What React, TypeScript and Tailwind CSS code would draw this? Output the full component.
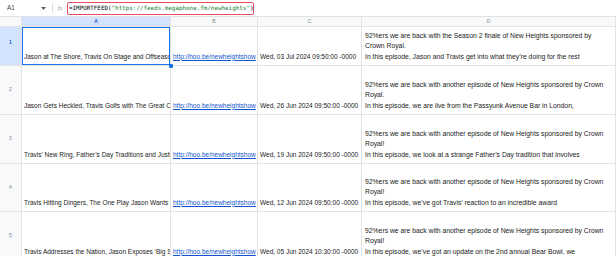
import React from 'react';

interface Row {
  n: number;
  title: string;
  date: string;
  desc: string[];
}

const rows: Row[] = [
  {
    n: 1,
    title: 'Jason at The Shore, Travis On Stage and Offseason Plans',
    date: 'Wed, 03 Jul 2024 09:50:00 -0000',
    desc: [
      '92%ers we are back with the Season 2 finale of New Heights sponsored by',
      'Crown Royal.',
      "In this episode, Jason and Travis get into what they\u2019re doing for the rest",
    ],
  },
  {
    n: 2,
    title: 'Jason Gets Heckled, Travis Golfs with The Great Champions',
    date: 'Wed, 26 Jun 2024 09:50:00 -0000',
    desc: [
      '92%ers we are back with another episode of New Heights sponsored by Crown',
      'Royal.',
      'In this episode, we are live from the Passyunk Avenue Bar in London,',
    ],
  },
  {
    n: 3,
    title: "Travis\u2019 New Ring, Father\u2019s Day Traditions and Justin Tucker",
    date: 'Wed, 19 Jun 2024 09:50:00 -0000',
    desc: [
      '92%ers we are back with another episode of New Heights sponsored by Crown',
      'Royal!',
      "In this episode, we look at a strange Father\u2019s Day tradition that involves",
    ],
  },
  {
    n: 4,
    title: 'Travis Hitting Dingers, The One Play Jason Wants | Ep 95',
    date: 'Wed, 12 Jun 2024 09:50:00 -0000',
    desc: [
      '92%ers we are back with another episode of New Heights sponsored by Crown',
      'Royal!',
      "In this episode, we\u2019ve got Travis\u2019 reaction to an incredible award",
    ],
  },
  {
    n: 5,
    title: "Travis Addresses the Nation, Jason Exposes \u2018Big Sue\u2019 and More",
    date: 'Wed, 05 Jun 2024 10:30:00 -0000',
    desc: [
      '92%ers we are back with another episode of New Heights sponsored by Crown',
      'Royal!',
      "In this episode, we\u2019ve got an update on the 2nd annual Bear Bowl, we",
    ],
  },
];

const cell = 'border-r border-b border-[#e2e3e3] overflow-hidden';

const App = () => {
  return (
    <div className="w-[616px] h-[256px] overflow-hidden bg-white text-[#222] font-['Liberation_Sans',Arial,sans-serif]">
      {/* Formula bar */}
      <div className="h-[17px] flex items-center border-b border-[#e2e3e3]">
        <div className="w-[52px] flex items-center justify-between pl-[7px] pr-[6px] text-[6.5px] text-[#444746]">
          <span>A1</span>
          <svg width="5" height="3" viewBox="0 0 5 3">
            <path d="M0 0h5L2.5 3z" fill="#5f6368" />
          </svg>
        </div>
        <div className="w-px h-[10px] bg-[#dadce0]" />
        <span className="w-[14px] text-center text-[6.5px] italic text-[#9aa0a6] font-['Liberation_Serif',serif]">fx</span>
        <div className="h-[13px] w-[187px] flex items-center px-[1px] border border-[#ea4c5f] rounded-[2px] font-['DejaVu_Sans_Mono',monospace] text-[5.9px] whitespace-nowrap">
          <span className="text-[#000]">=IMPORTFEED(</span>
          <span className="text-[#188038]">"https://feeds.megaphone.fm/newheights"</span>
          <span className="text-[#000]">)</span>
        </div>
      </div>

      {/* Sheet grid */}
      <div className="grid grid-cols-[22px_149px_87px_104px_254px] grid-rows-[10px_39px_49px_49px_48px_49px] text-[6.5px]">
        {/* header row */}
        <div className={`${cell} bg-[#f8f9fa]`} />
        <div className={`${cell} bg-[#d3e3fd] flex items-center justify-center text-[5px] text-[#0b57d0] font-semibold`}>A</div>
        <div className={`${cell} bg-[#f8f9fa] flex items-center justify-center text-[5px] text-[#80868b]`}>B</div>
        <div className={`${cell} bg-[#f8f9fa] flex items-center justify-center text-[5px] text-[#80868b]`}>C</div>
        <div className={`${cell} bg-[#f8f9fa] flex items-center justify-center text-[5px] text-[#80868b]`}>D</div>

        {rows.map((r) => (
          <React.Fragment key={r.n}>
            <div
              className={`${cell} flex items-center justify-center text-[5px] ${
                r.n === 1 ? 'bg-[#d3e3fd] text-[#0b57d0] font-semibold pb-[6px]' : 'bg-[#f8f9fa] text-[#80868b]'
              }`}
            >
              {r.n}
            </div>
            <div className={`${cell} relative flex items-end pl-[2px] pb-[3px] leading-[10.5px] whitespace-nowrap`}>
              <span className="block w-full overflow-hidden">{r.title}</span>
              {r.n === 1 && (
                <div className="absolute inset-0 border-[1.5px] border-[#1a73e8]" />
              )}
            </div>
            <div className={`${cell} flex items-end pl-[2px] pb-[3px] leading-[10.5px] whitespace-nowrap`}>
              <span className="text-[#1155cc] underline">http://hoo.be/newheightshow</span>
            </div>
            <div className={`${cell} flex items-end pl-[2px] pb-[3px] leading-[10.5px] whitespace-nowrap`}>
              <span>{r.date}</span>
            </div>
            <div className={`${cell} flex flex-col justify-end pl-[3px] pb-[3px] text-[6.8px] leading-[10.5px] whitespace-nowrap`}>
              {r.desc.map((line) => (
                <span key={line}>{line}</span>
              ))}
            </div>
          </React.Fragment>
        ))}
      </div>
      {/* fill handle of the selected cell */}
      <div className="absolute left-[169px] top-[64px] w-[4px] h-[4px] bg-[#1a73e8] rounded-[1px]" />
    </div>
  );
};

export default App;
